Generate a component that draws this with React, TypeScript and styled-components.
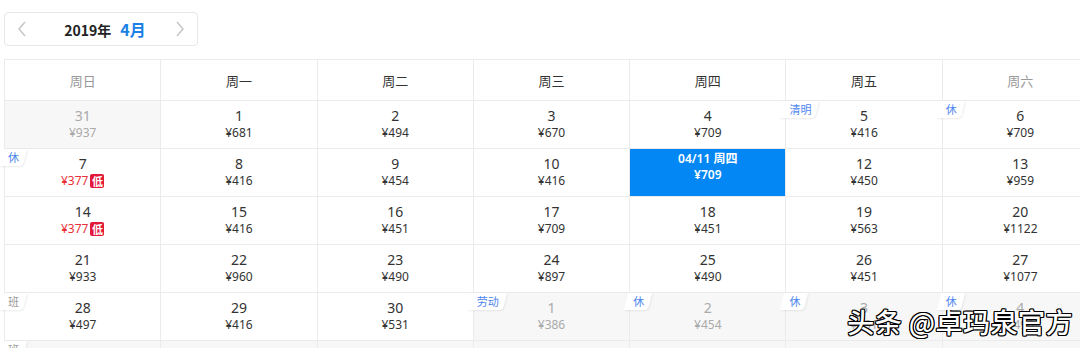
import React from 'react';
import styled, {createGlobalStyle, css} from "styled-components";

const GlobalStyle = createGlobalStyle`
  html, body {
    margin: 0;
    padding: 0;
    background: #fff;
    overflow: hidden;
  }
  body {
    font-family: "Noto Sans", "Noto Sans CJK SC", sans-serif;
    color: #333;
  }
`

const PageSC = styled('div')`
  position: relative;
  width: 1080px;
  height: 348px;
  overflow: hidden;
  padding: 12px 0 0 4px;
  box-sizing: border-box;
`

const MonthNavSC = styled('div')`
  width: 194px;
  height: 34px;
  box-sizing: border-box;
  border: 1px solid #e6e6e6;
  border-radius: 4px;
  display: flex;
  align-items: center;
  justify-content: space-between;
  padding: 0 12px 0 12px;
  margin-bottom: 13px;

  .title {
    display: flex;
    align-items: baseline;
    gap: 9px;
    font-family: "Noto Sans CJK SC", sans-serif;
    margin-left: 8px;
  }
  .year {
    font-size: 14px;
    font-weight: 700;
    color: #222;
  }
  .month {
    font-size: 16px;
    font-weight: 700;
    color: #1b7fe6;
  }
`

const ArrowSC = styled('svg')`
  width: 10px;
  height: 16px;
  display: block;
`

const GridSC = styled('div')`
  width: 1095px;
  display: grid;
  grid-template-columns: repeat(7, 1fr);
  border-left: 1px solid #ebebeb;
  border-top: 1px solid #ebebeb;
  box-sizing: border-box;
`

const HeadCellSC = styled('div')<{ $weekend?: boolean }>`
  height: 41px;
  display: flex;
  align-items: center;
  justify-content: center;
  border-right: 1px solid #ebebeb;
  border-bottom: 1px solid #ebebeb;
  box-sizing: border-box;
  font-family: "Noto Sans CJK SC", sans-serif;
  font-size: 13px;
  color: ${p => p.$weekend ? '#999' : '#333'};
`

const DayCellSC = styled('div')<{ $other?: boolean; $selected?: boolean }>`
  position: relative;
  height: 48px;
  box-sizing: border-box;
  border-right: 1px solid #ebebeb;
  border-bottom: 1px solid #ebebeb;
  display: flex;
  flex-direction: column;
  align-items: center;
  padding-top: 6px;
  background: ${p => p.$other ? '#f7f7f7' : '#fff'};
  color: ${p => p.$other ? '#aaa' : '#333'};

  ${p => p.$selected && css`
    background: #0387f5;
    color: #fff;
    padding-top: 2px;
    font-weight: 600;
  `}
`

const DayNumSC = styled('div')`
  font-size: 14px;
  line-height: 18px;
`

const PriceSC = styled('div')<{ $low?: boolean }>`
  font-size: 12px;
  line-height: 16px;
  display: flex;
  align-items: center;
  gap: 2px;
  color: ${p => p.$low ? '#e8303a' : 'inherit'};
`

const SelectedLineSC = styled('div')`
  font-family: "Noto Sans", "Noto Sans CJK SC", sans-serif;
  font-size: 12px;
  line-height: 16px;
`

const LowBadgeSC = styled('span')`
  display: inline-flex;
  align-items: center;
  justify-content: center;
  width: 14px;
  height: 14px;
  border-radius: 2px;
  background: #e3193a;
  color: #fff;
  font-size: 11px;
  font-weight: 700;
  font-family: "Noto Sans CJK SC", sans-serif;
`

const TagSC = styled('span')<{ $work?: boolean }>`
  position: absolute;
  top: 0;
  left: 0;
  z-index: 1;
  padding: 0 8px 0 3px;
  height: 17px;
  line-height: 17px;
  font-size: 11px;
  font-family: "Noto Sans CJK SC", sans-serif;
  color: ${p => p.$work ? '#999' : '#4d86f0'};

  &::before {
    content: '';
    position: absolute;
    inset: 0 2px 0 -4px;
    z-index: -1;
    background: #fff;
    border-radius: 0 0 4px 0;
    transform: skewX(-14deg);
    box-shadow: 1px 1px 2px rgba(0, 0, 0, 0.08);
  }
`

const WatermarkSC = styled('div')`
  position: absolute;
  right: 7px;
  bottom: 7px;
  font-family: "Noto Sans CJK SC", sans-serif;
  font-size: 27px;
  font-weight: 500;
  color: #fff;
  letter-spacing: 0.5px;
  text-shadow:
    1px 0 0 #000, -1px 0 0 #000, 0 1px 0 #000, 0 -1px 0 #000,
    1px 1px 0 #000, -1px -1px 0 #000, 1px -1px 0 #000, -1px 1px 0 #000;
`

interface Day {
    d: string;
    p: string;
    other?: boolean;
    low?: boolean;
    tag?: string;
    work?: boolean;
    selected?: string;
}

const weeks = ['周日', '周一', '周二', '周三', '周四', '周五', '周六'];

const days: Day[] = [
    {d: '31', p: '937', other: true}, {d: '1', p: '681'}, {d: '2', p: '494'}, {d: '3', p: '670'},
    {d: '4', p: '709'}, {d: '5', p: '416', tag: '清明'}, {d: '6', p: '709', tag: '休'},
    {d: '7', p: '377', low: true, tag: '休'}, {d: '8', p: '416'}, {d: '9', p: '454'}, {d: '10', p: '416'},
    {d: '11', p: '709', selected: '04/11 周四'}, {d: '12', p: '450'}, {d: '13', p: '959'},
    {d: '14', p: '377', low: true}, {d: '15', p: '416'}, {d: '16', p: '451'}, {d: '17', p: '709'},
    {d: '18', p: '451'}, {d: '19', p: '563'}, {d: '20', p: '1122'},
    {d: '21', p: '933'}, {d: '22', p: '960'}, {d: '23', p: '490'}, {d: '24', p: '897'},
    {d: '25', p: '490'}, {d: '26', p: '451'}, {d: '27', p: '1077'},
    {d: '28', p: '497', tag: '班', work: true}, {d: '29', p: '416'}, {d: '30', p: '531'},
    {d: '1', p: '386', other: true, tag: '劳动'}, {d: '2', p: '454', other: true, tag: '休'},
    {d: '3', p: '451', other: true, tag: '休'}, {d: '4', p: '490', other: true, tag: '休'},
    {d: '5', p: '497', other: true, tag: '班', work: true}, {d: '6', p: '416', other: true},
    {d: '7', p: '451', other: true}, {d: '8', p: '709', other: true}, {d: '9', p: '451', other: true},
    {d: '10', p: '563', other: true}, {d: '11', p: '709', other: true},
];

const Arrow = ({dir}: { dir: 'left' | 'right' }) => (
    <ArrowSC viewBox="0 0 10 16">
        <path d={dir === 'left' ? 'M8 1L2 8l6 7' : 'M2 1l6 7-6 7'} fill="none" stroke="#c4c4c4" strokeWidth="1.4"/>
    </ArrowSC>
);

export default function App() {
    return (
        <PageSC>
            <GlobalStyle/>
            <MonthNavSC>
                <Arrow dir="left"/>
                <div className={'title'}>
                    <span className={'year'}>2019年</span>
                    <span className={'month'}>4月</span>
                </div>
                <Arrow dir="right"/>
            </MonthNavSC>
            <GridSC>
                {weeks.map((w, i) => (
                    <HeadCellSC key={w} $weekend={i === 0 || i === 6}>{w}</HeadCellSC>
                ))}
                {days.map((day, i) => (
                    <DayCellSC key={i} $other={day.other} $selected={!!day.selected}>
                        {day.tag && <TagSC $work={day.work}>{day.tag}</TagSC>}
                        {day.selected ? (
                            <>
                                <SelectedLineSC>{day.selected}</SelectedLineSC>
                                <SelectedLineSC>¥{day.p}</SelectedLineSC>
                            </>
                        ) : (
                            <>
                                <DayNumSC>{day.d}</DayNumSC>
                                <PriceSC $low={day.low}>
                                    ¥{day.p}
                                    {day.low && <LowBadgeSC>低</LowBadgeSC>}
                                </PriceSC>
                            </>
                        )}
                    </DayCellSC>
                ))}
            </GridSC>
            <WatermarkSC>头条 @卓玛泉官方</WatermarkSC>
        </PageSC>
    );
}
